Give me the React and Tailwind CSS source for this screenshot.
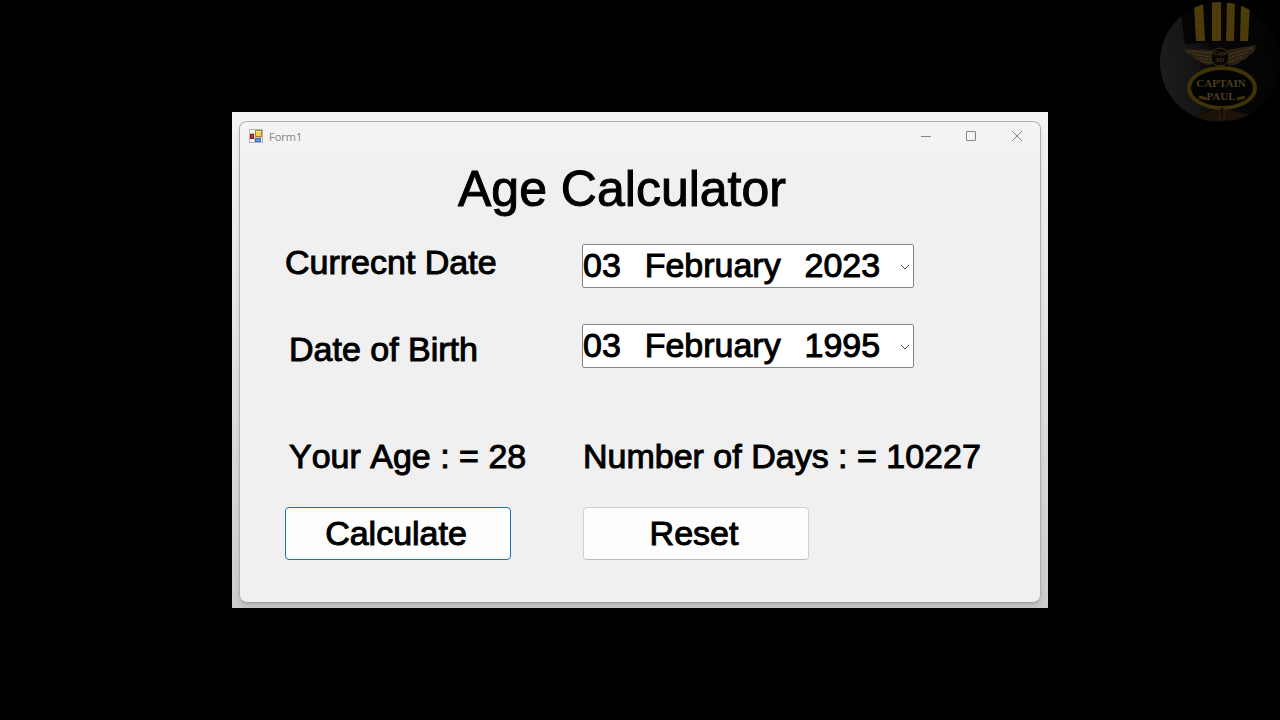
import { useState } from 'react';
import clsx from 'clsx';

const DAY = 24 * 60 * 60 * 1000;

// En space + thin space between the parts of a long date
const GAP = '\u2002\u2009';

const parseDate = text => new Date(text.replace(/\s+/g, ' '));

const calculateAge = (current, birth) => {
  const to = parseDate(current);
  const from = parseDate(birth);
  let years = to.getFullYear() - from.getFullYear();

  // Birthday has not come round yet this year
  if (
    to.getMonth() < from.getMonth() ||
    (to.getMonth() === from.getMonth() && to.getDate() < from.getDate())
  ) {
    years -= 1;
  }

  return { years, days: Math.round((to - from) / DAY) };
};

const App = () => {
  const [currentDate, setCurrentDate] = useState(['03', 'February', '2023'].join(GAP));
  const [birthDate, setBirthDate] = useState(['03', 'February', '1995'].join(GAP));
  const [result, setResult] = useState({ years: 28, days: 10227 });

  return (
    <div className="relative min-h-screen bg-black flex items-center justify-center">
      <Logo />

      {/* Desktop backdrop around the window */}
      <div className="w-full max-w-[816px] bg-linear-to-b from-[#f4f4f4] via-[#e2e2e2] to-[#cccccc] px-[7px] pt-[9px] pb-[5px]">
        <div className="rounded-lg border border-[#b0b0b0] border-b-[#a0a0a0] bg-[#f0f0f0] overflow-hidden shadow-md">
          <TitleBar title="Form1" />

          <main className="pt-[9px] pb-[42px] px-[45px] font-['Liberation_Sans',Arial,sans-serif] text-black [font-kerning:none] [-webkit-text-stroke:1px_black]">
            <h1 className="pr-9 text-center text-[50px] leading-[56px]">Age Calculator</h1>

            <div className="flex text-[34px] leading-[44px] whitespace-nowrap">
              <div className="w-[297px] shrink-0 flex flex-col items-start pt-[23px]">
                <label htmlFor="current-date">Currecnt Date</label>
                <label htmlFor="birth-date" className="mt-[43px] pl-1">Date of Birth</label>
                <p className="mt-[63px] pl-1">Your Age : = {result.years}</p>
                <FormButton primary onClick={() => setResult(calculateAge(currentDate, birthDate))}>
                  Calculate
                </FormButton>
              </div>

              <div className="flex-1 flex flex-col items-start pt-[27px]">
                <DatePicker id="current-date" value={currentDate} onChange={setCurrentDate} />
                <div className="mt-9">
                  <DatePicker id="birth-date" value={birthDate} onChange={setBirthDate} />
                </div>
                <p className="mt-[66px] pl-px">Number of Days : = {result.days}</p>
                <FormButton onClick={() => setResult({ years: '', days: '' })}>Reset</FormButton>
              </div>
            </div>
          </main>
        </div>
      </div>
    </div>
  );
};

const TitleBar = ({ title }) => {
  return (
    <header className="h-[30px] bg-[#f3f3f3] flex items-center text-[#858585]">
      <svg className="ml-[9px] mb-[2px] w-[14px] h-[14px]" viewBox="0 0 14 14">
        <rect x="0.5" y="0.5" width="13" height="13" fill="#f4f4f4" stroke="#b5b5b5" />
        <path d="M0 4.5h6M5.5 8v6M5.5 8.500h8" stroke="#c4c4c4" />
        <rect x="6.5" y="1.500" width="6" height="6" fill="#f4cf3f" stroke="#a58422" />
        <path d="M7 2.500h5" stroke="#fbe98d" />
        <rect x="1.5" y="5.5" width="3" height="4" fill="#d43333" stroke="#861c1c" />
        <rect x="6.5" y="9.5" width="5" height="3" fill="#6596ef" stroke="#4769bd" />
      </svg>
      <span className="ml-[6px] flex-1 text-[11px] leading-4 font-['Open_Sans','Noto_Sans',sans-serif]">
        {title}
      </span>

      <WindowButton label="Minimize">
        <path d="M2 5.500h10" />
      </WindowButton>
      <WindowButton label="Maximize">
        <rect x="1.5" y="0.5" width="9" height="9" rx="0.5" />
      </WindowButton>
      <WindowButton label="Close">
        <path d="M1 0l10 10M11 0L1 10" />
      </WindowButton>
    </header>
  );
};

const WindowButton = ({ label, children }) => {
  return (
    <button aria-label={label} className="w-[46px] h-full flex items-center justify-center hover:bg-gray-200">
      <svg className="w-3 h-3" viewBox="0 0 12 12" fill="none" stroke="currentColor">
        {children}
      </svg>
    </button>
  );
};

const DatePicker = ({ id, value, onChange }) => {
  return (
    <div className="w-[332px] h-11 flex items-center rounded-xs border border-[#868686] bg-white">
      <input
        id={id}
        type="text"
        value={value}
        onChange={e => onChange(e.target.value)}
        className="flex-1 min-w-0 h-[42px] pb-[2px] leading-10 outline-none"
      />
      <button aria-label="Open calendar" className="w-[13px] h-full flex items-center">
        <svg className="w-[10px] h-[10px]" viewBox="0 0 10 10" fill="none" stroke="#555555">
          <path d="M1 4l4 4 4-4" />
        </svg>
      </button>
    </div>
  );
};

const FormButton = ({ primary = false, onClick, children }) => {
  return (
    <button
      onClick={onClick}
      className={clsx(
        'mt-[29px] w-[226px] h-[53px] pb-[2px] pr-1 rounded-sm border bg-[#fdfdfd] cursor-pointer',
        primary ? 'border-[#1a75b0]' : 'ml-px border-[#d0d0d0] border-b-[#bbbbbb]'
      )}
    >
      {children}
    </button>
  );
};

// Channel badge in the corner
const Logo = () => {
  return (
    <svg className="absolute top-0 right-0 w-[130px] h-[130px]" viewBox="0 0 130 130">
      <defs>
        <linearGradient id="badge" x1="0" y1="0.5" x2="1" y2="0.4">
          <stop offset="0" stopColor="#1d1d1d" />
          <stop offset="0.3" stopColor="#161616" />
          <stop offset="0.5" stopColor="#080707" />
          <stop offset="1" stopColor="#030303" />
        </linearGradient>
        <clipPath id="badge-clip">
          <circle cx="70" cy="62" r="60" />
        </clipPath>
      </defs>
      <g clipPath="url(#badge-clip)">
        <rect width="130" height="130" fill="url(#badge)" />
        <path d="M29 0h75l-3 41-66 3z" fill="#050303" />
        <path d="M44 5l9-3 2 39h-9zM62 1h9v40h-9zM77 1h8l-1 40h-8zM91 3l9 3-2 35h-8z" fill="#4c3c09" />

        {/* Wings */}
        <path
          d="M34 49l29 1v14c-6 2-11 0-14-3-4-1-6-3-7-5-4-1-6-3-8-7zM106 45l-30 5 2 15c6 1 11-1 13-4 4-1 7-3 8-6 4-1 6-4 7-10z"
          fill="#292113"
        />
        <path
          d="M38 51l23 2M42 54l19 3M47 58l14 2M51 61l10 2M102 48l-22 6M98 52l-19 6M92 57l-13 5"
          stroke="#54431f"
          strokeWidth="1"
          strokeDasharray="2 1"
        />
        <circle cx="70" cy="57" r="9" fill="#090706" stroke="#3b3011" strokeWidth="1" />
        <g fill="#54451a" textAnchor="middle" className="font-['Liberation_Serif',serif]">
          <text x="70" y="55" fontSize="7">Capt</text>
          <text x="70" y="62" fontSize="6">PO</text>
        </g>

        {/* Name plate */}
        <path d="M44 118l22-9 14 1 20 5-9 5-42 1z" fill="#1c1208" />
        <ellipse cx="72" cy="88" rx="33" ry="20" fill="#020202" stroke="#3e3206" strokeWidth="4" />
        <path d="M49 97l8 2M87 99l8-2" stroke="#3e3206" strokeWidth="3" />
        <path d="M70 108h4v12h-4z" fill="#140d07" stroke="#33271a" />
        <g
          fill="#4a3f1f"
          textAnchor="middle"
          fontWeight="bold"
          className="font-['Liberation_Serif',serif]"
        >
          <text x="71" y="87" fontSize="11">CAPTAIN</text>
          <text x="71" y="100" fontSize="11">PAUL</text>
        </g>
      </g>
    </svg>
  );
};

export default App;
